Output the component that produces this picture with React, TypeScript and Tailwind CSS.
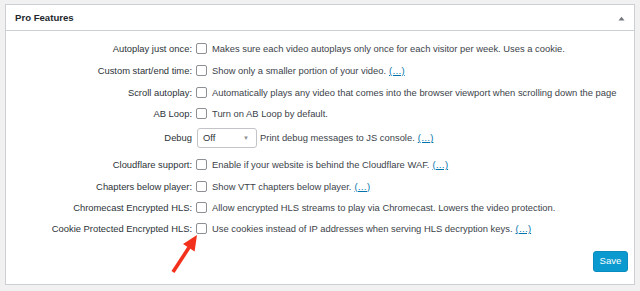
import React from "react";

type Row = {
  label: string;
  text: string;
  more?: boolean;
};

const TOP_ROWS: Row[] = [
  {
    label: "Autoplay just once:",
    text: "Makes sure each video autoplays only once for each visitor per week. Uses a cookie.",
  },
  { label: "Custom start/end time:", text: "Show only a smaller portion of your video.", more: true },
  {
    label: "Scroll autoplay:",
    text: "Automatically plays any video that comes into the browser viewport when scrolling down the page",
  },
  { label: "AB Loop:", text: "Turn on AB Loop by default." },
];

const BOTTOM_ROWS: Row[] = [
  { label: "Cloudflare support:", text: "Enable if your website is behind the Cloudflare WAF.", more: true },
  { label: "Chapters below player:", text: "Show VTT chapters below player.", more: true },
  {
    label: "Chromecast Encrypted HLS:",
    text: "Allow encrypted HLS streams to play via Chromecast. Lowers the video protection.",
  },
  {
    label: "Cookie Protected Encrypted HLS:",
    text: "Use cookies instead of IP addresses when serving HLS decryption keys.",
    more: true,
  },
];

function More() {
  return <span className="ml-[3px] text-[#0073aa] underline underline-offset-[1px]">(…)</span>;
}

function CheckRow({ row, height }: { row: Row; height: string }) {
  return (
    <div className={`flex items-center ${height}`}>
      <span className="w-[186px] shrink-0 text-right text-[#2c3338]">{row.label}</span>
      <span className="ml-[4px] w-[11px] h-[11px] shrink-0 rounded-[2px] border border-[#8c8f94] bg-white" />
      <span className="ml-[5px] whitespace-nowrap text-[#3c434a]">
        {row.text}
        {row.more && <More />}
      </span>
    </div>
  );
}

export default function App() {
  return (
    <div className="relative w-[640px] h-[291px] bg-[#f1f1f1] pt-[4px] pl-[5px] font-['Liberation_Sans',Arial,sans-serif] text-[9.4px] leading-none">
      <div className="w-[630px] h-[281px] border border-[#ccd0d4] bg-white flex flex-col">
        {/* Header */}
        <div className="h-[26px] shrink-0 flex items-center justify-between border-b border-[#ccd0d4] pl-[9px] pr-[9px]">
          <span className="font-bold text-[9.6px] text-[#23282d]">Pro Features</span>
          <svg width="7" height="5" viewBox="0 0 7 5" className="mt-[1px]">
            <path d="M0.5 4.5 L3.5 0.8 L6.5 4.5 Z" fill="#72777c" />
          </svg>
        </div>

        {/* Settings */}
        <div className="pt-[7px] flex flex-col">
          {TOP_ROWS.map((row) => (
            <CheckRow key={row.label} row={row} height="h-[21.7px]" />
          ))}

          <div className="flex items-center pt-[3.2px] pb-[6.2px]">
            <span className="w-[186px] shrink-0 text-right text-[#2c3338]">Debug</span>
            <div className="ml-[5px] w-[60px] h-[20px] shrink-0 flex items-center justify-between rounded-[3px] border border-[#c3c4c7] bg-white pl-[5px] pr-[7px]">
              <span className="text-[#2c3338]">Off</span>
              <span className="text-[6px] text-[#8c8f94]">▼</span>
            </div>
            <span className="ml-[3px] whitespace-nowrap text-[#3c434a]">
              Print debug messages to JS console.
              <More />
            </span>
          </div>

          {BOTTOM_ROWS.map((row) => (
            <CheckRow key={row.label} row={row} height="h-[21.4px]" />
          ))}

          <div className="flex justify-end pr-[6px] mt-[11px]">
            <button
              type="button"
              className="w-[35px] h-[21px] rounded-[3px] bg-[#0a9ad0] border border-[#0a8cc0] text-white text-[9.6px]"
            >
              Save
            </button>
          </div>
        </div>
      </div>

      {/* Red pointer arrow */}
      <svg className="absolute left-0 top-0 pointer-events-none" width="640" height="291">
        <line x1="173" y1="272" x2="189" y2="247.5" stroke="#f2301b" strokeWidth="3.6" strokeLinecap="butt" />
        <polygon points="197,235 194.6,251.4 183,244" fill="#f2301b" />
      </svg>
    </div>
  );
}
